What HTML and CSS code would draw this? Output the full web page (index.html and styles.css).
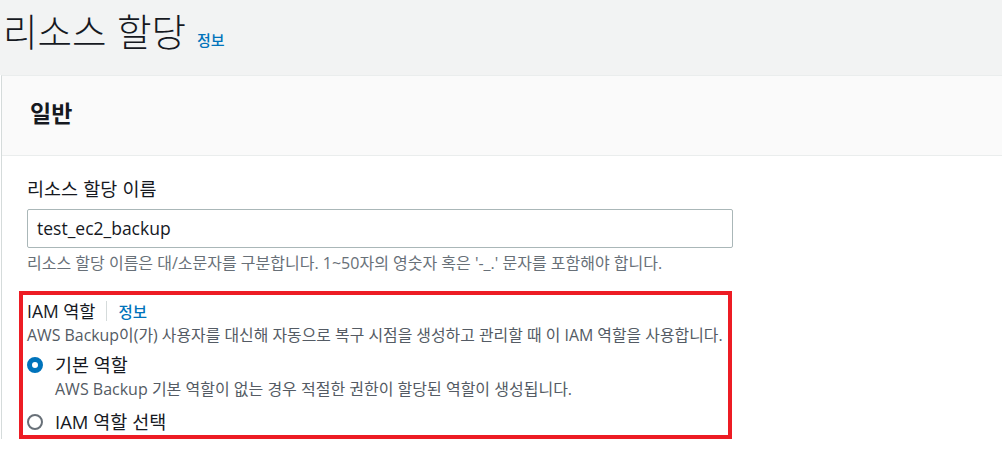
FILE: index.html
```html
<!DOCTYPE html>
<html lang="ko">
<head>
<meta charset="utf-8">
<title>리소스 할당</title>
<link rel="stylesheet" href="styles.css">
</head>
<body>
<header class="page-head">
  <h1 class="title">리소스 할당</h1>
  <a class="info-link title-info" href="#">정보</a>
</header>
<section class="card">
  <div class="card-head"><h2 class="card-title">일반</h2></div>
  <div class="card-body">
    <div class="field">
      <label class="label" for="name">리소스 할당 이름</label>
      <div class="input">test_ec2_backup</div>
      <p class="hint">리소스 할당 이름은 대/소문자를 구분합니다. 1~50자의 영숫자 혹은 '-_.' 문자를 포함해야 합니다.</p>
    </div>
    <div class="highlight">
      <div class="role-label-row">
        <span class="role-label">IAM 역할</span>
        <span class="sep"></span>
        <a class="info-link role-info" href="#">정보</a>
      </div>
      <p class="desc">AWS Backup이(가) 사용자를 대신해 자동으로 복구 시점을 생성하고 관리할 때 이 IAM 역할을 사용합니다.</p>
      <div class="radio-row first">
        <span class="radio checked"></span>
        <div class="radio-text">
          <span class="radio-label">기본 역할</span>
          <p class="radio-desc">AWS Backup 기본 역할이 없는 경우 적절한 권한이 할당된 역할이 생성됩니다.</p>
        </div>
      </div>
      <div class="radio-row second">
        <span class="radio"></span>
        <div class="radio-text">
          <span class="radio-label">IAM 역할 선택</span>
        </div>
      </div>
    </div>
  </div>
</section>
</body>
</html>
```
FILE: styles.css
```css
* { box-sizing: border-box; }
html, body { margin: 0; padding: 0; }
body {
  background: #ffffff;
  font-family: "Open Sans", "Noto Sans CJK KR", sans-serif;
  color: #16191f;
  overflow: hidden;
}
.page-head {
  background: #f2f3f3;
  height: 75px;
  display: flex;
  align-items: baseline;
  padding: 8px 0 0 3px;
}
.title {
  margin: 0;
  font-family: "Noto Sans CJK KR", sans-serif;
  font-weight: 300;
  font-size: 37.5px;
  line-height: 44px;
  color: #16191f;
}
.info-link {
  color: #0073bb;
  text-decoration: none;
  font-family: "Noto Sans CJK KR", sans-serif;
  font-weight: 500;
}
.title-info { margin-left: 11px; font-size: 15px; }
.card {
  margin-left: 1px;
  border-left: 1px solid #d5dbdb;
  border-top: 1px solid #eaeded;
}
.card-head {
  background: #fafafa;
  height: 80px;
  border-bottom: 1px solid #eaeded;
  padding: 20px 0 0 28px;
}
.card-title {
  margin: 0;
  font-family: "Noto Sans CJK KR", sans-serif;
  font-weight: 700;
  font-size: 23px;
  line-height: 32px;
  color: #16191f;
}
.card-body {
  padding: 19px 0 0 17px;
}
.field { padding-left: 8px; }
.label {
  display: block;
  font-family: "Noto Sans CJK KR", sans-serif;
  font-size: 18.5px;
  line-height: 26px;
  color: #16191f;
  margin-bottom: 8px;
}
.input {
  width: 706px;
  height: 39px;
  border: 1px solid #aab7b8;
  border-radius: 2px;
  padding: 0 9px;
  font-family: "Open Sans", sans-serif;
  font-size: 17.5px;
  line-height: 37px;
  color: #16191f;
}
.hint {
  margin: 5px 0 0;
  font-family: "Open Sans", "Noto Sans CJK KR", sans-serif;
  font-size: 16px;
  line-height: 20px;
  color: #687078;
}
.highlight {
  margin-top: 18px;
  width: 713px;
  height: 148px;
  border: 4px solid #ed1c24;
  padding: 3px 0 0 4px;
}
.role-label-row {
  display: flex;
  align-items: center;
  height: 26px;
}
.role-label {
  font-family: "Open Sans", "Noto Sans CJK KR", sans-serif;
  font-size: 17.5px;
  line-height: 26px;
  color: #16191f;
}
.role-info { font-size: 15.5px; }
.sep {
  width: 1px;
  height: 20px;
  background: #d5dbdb;
  margin: 0 11px 0 11px;
}
.desc {
  margin: 1px 0 0;
  font-family: "Open Sans", "Noto Sans CJK KR", sans-serif;
  font-size: 15.9px;
  line-height: 20px;
  color: #545b64;
}
.radio-row {
  display: flex;
  align-items: flex-start;
}
.radio-row.first { margin-top: 7px; }
.radio-row.second { margin-top: 10px; }
.radio {
  width: 16px;
  height: 16px;
  border-radius: 50%;
  border: 2px solid #687078;
  margin-top: 5px;
  flex: none;
}
.radio.checked {
  border: 5px solid #0073bb;
  background: #fff;
}
.radio-text { margin-left: 12px; }
.radio-label {
  display: block;
  font-family: "Open Sans", "Noto Sans CJK KR", sans-serif;
  font-size: 18.5px;
  line-height: 26px;
  color: #16191f;
}
.radio-desc {
  margin: 1px 0 0;
  font-family: "Open Sans", "Noto Sans CJK KR", sans-serif;
  font-size: 16px;
  line-height: 20px;
  color: #545b64;
}
```
